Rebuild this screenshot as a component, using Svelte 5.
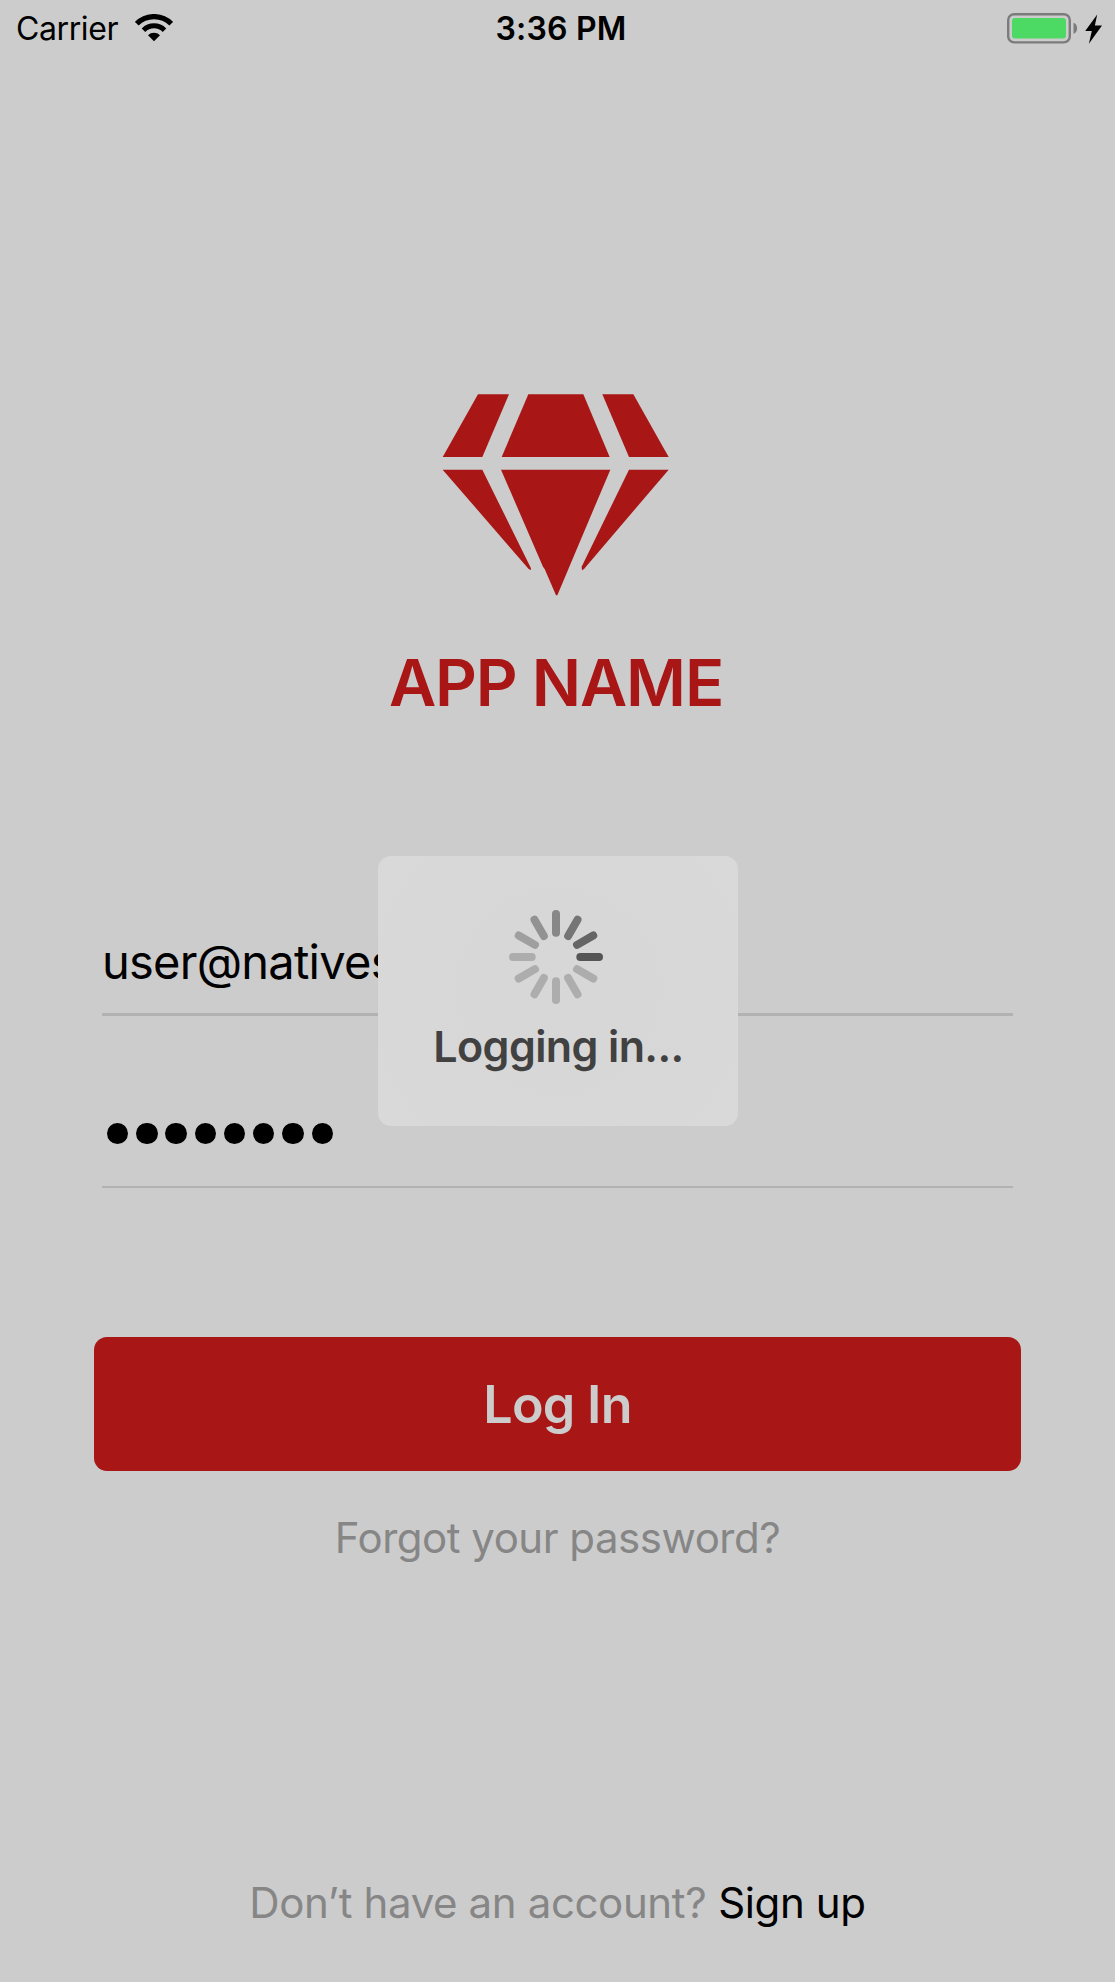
<script>
  const email = 'user@nativescript.org';
  const passwordDots = Array.from({ length: 8 });

  // Spinner spokes, clockwise from twelve o'clock
  const spokes = [
    '#878787', '#757575', '#656565', '#555555', '#adadad', '#adadad',
    '#adadad', '#adadad', '#adadad', '#adadad', '#9f9f9f', '#929292'
  ];
</script>

<main class="screen">
  <header class="status">
    <div class="network">
      <span class="carrier">Carrier</span>
      <svg class="wifi" viewBox="0 0 38 28" aria-hidden="true">
        <path d="M1.8 9.7 A24.3 24.3 0 0 1 36.2 9.7" fill="none" stroke="#000" stroke-width="5.2" />
        <path d="M8.5 16.2 A14.9 14.9 0 0 1 29.5 16.2" fill="none" stroke="#000" stroke-width="5" />
        <path d="M13 21.2 A8.6 8.6 0 0 1 25 21.2 L19 27.2 Z" />
      </svg>
    </div>
    <span class="time">3:36 PM</span>
    <div class="power">
      <svg class="battery" viewBox="0 0 72 31" aria-hidden="true">
        <rect x="1.2" y="1.2" width="61.6" height="28.2" rx="6" fill="none" stroke="#7b7b7b" stroke-width="2.4" />
        <rect x="5" y="5" width="54" height="20.5" rx="3" fill="#4cd964" />
        <path d="M66.5 9.8 C71.3 11.2 71.3 19.4 66.5 20.8 Z" fill="#7b7b7b" />
      </svg>
      <svg class="bolt" viewBox="0 0 17 30" aria-hidden="true">
        <path d="M12.2 .5 L.2 17 H6.8 L3.9 29.7 L17 11.6 H9.9 Z" />
      </svg>
    </div>
  </header>

  <svg class="logo" viewBox="60 72 705 606" aria-hidden="true">
    <path d="M174 73H267L187 261H68Z" />
    <path d="M325 73H490L569 261H245Z" />
    <path d="M547 73H640L746 261H627Z" />
    <path d="M68 299H187L330 589Q334 596 333 600L326 597Z" />
    <path d="M243 299H571L448 590L444 600L412 676H408L374 597L369 590Z" />
    <path d="M627 299H746L492 597L486 601L485 590Z" />
  </svg>
  <h1>APP NAME</h1>

  <form class="fields" onsubmit={(e) => e.preventDefault()}>
    <div class="field email">{email}</div>
    <div class="field password">
      {#each passwordDots as _}<i></i>{/each}
    </div>
    <button type="submit">Log In</button>
  </form>

  <p class="forgot">Forgot your password?</p>
  <footer>
    <span class="question">Don’t have an account?</span>
    <span class="signup">Sign up</span>
  </footer>

  <div class="overlay">
    <div class="dialog">
      <svg class="spinner" viewBox="-48 -48 96 96" aria-hidden="true">
        {#each spokes as color, i}
          <line y1="-43" y2="-24.3" stroke={color} transform="rotate({i * 30})" />
        {/each}
      </svg>
      <span class="message">Logging in...</span>
    </div>
  </div>
</main>

<style>
  :global(body) {
    margin: 0;
    background: #ccc;
  }
  .screen {
    position: relative;
    display: flex;
    flex-direction: column;
    align-items: center;
    width: 1115px;
    height: 1982px;
    overflow: hidden;
    background: #ccc;
    color: #000;
    font-family: Inter, 'Liberation Sans', sans-serif;
  }
  .status {
    display: grid;
    grid-template-columns: 1fr auto 1fr;
    align-items: center;
    box-sizing: border-box;
    width: 100%;
    height: 56px;
    padding: 0 13px 0 16px;
    font-size: 32px;
    line-height: 58px;
  }
  .network,
  .power {
    display: flex;
    align-items: center;
  }
  .network {
    gap: 17px;
  }
  .carrier {
    letter-spacing: -0.4px;
  }
  .wifi {
    width: 38px;
    height: 28px;
    margin-bottom: 2px;
  }
  .time {
    padding-left: 4px;
    font-weight: 600;
    letter-spacing: 0.23px;
  }
  .power {
    justify-content: flex-end;
    gap: 6px;
    margin-bottom: 1px;
  }
  .battery {
    width: 72px;
    height: 31px;
  }
  .bolt {
    width: 17px;
    height: 30px;
  }
  .logo {
    flex: none;
    width: 235px;
    height: 202px;
    margin-top: 338px;
    fill: #a81616;
  }
  h1 {
    margin: 47px 3px 0 0;
    color: #a81616;
    font-size: 65px;
    font-weight: 600;
    line-height: 80px;
    letter-spacing: -1.16px;
  }
  .fields {
    display: flex;
    flex-direction: column;
    align-items: center;
    width: 927px;
    margin-top: 208px;
  }
  .field {
    box-sizing: border-box;
    width: 911px;
    border-bottom: 3px solid #b2b2b2;
  }
  .email {
    height: 85px;
    font-size: 47px;
    line-height: 62px;
    letter-spacing: -0.75px;
  }
  .password {
    display: flex;
    gap: 7.95px;
    height: 172px;
    padding: 107px 0 0 5px;
    border-bottom-width: 2px;
  }
  .password i {
    width: 21.3px;
    height: 21.3px;
    border-radius: 50%;
    background: #000;
  }
  button {
    width: 927px;
    height: 134px;
    margin-top: 149px;
    padding: 2px 0 0;
    border: 0;
    border-radius: 13px;
    background: #a81616;
    color: #ccc;
    font: 600 52px/132px Inter, 'Liberation Sans', sans-serif;
    letter-spacing: -0.72px;
  }
  .forgot {
    margin: 37px 0 0;
    color: #868686;
    font-size: 42px;
    line-height: 60px;
    letter-spacing: -0.48px;
  }
  footer {
    display: flex;
    gap: 12px;
    margin-top: 305px;
    font-size: 42px;
    line-height: 60px;
    letter-spacing: -0.38px;
  }
  .question {
    color: #868686;
  }
  .overlay {
    position: absolute;
    inset: 0;
    display: grid;
    place-items: center;
  }
  .dialog {
    display: flex;
    flex-direction: column;
    align-items: center;
    box-sizing: border-box;
    width: 360px;
    height: 270px;
    padding-top: 53px;
    border-radius: 13px;
    background: radial-gradient(circle, #d7d7d7 40%, #d9d9d9);
  }
  .spinner {
    flex: none;
    width: 96px;
    height: 96px;
    margin-right: 4px;
  }
  .spinner line {
    stroke-width: 8;
    stroke-linecap: round;
  }
  .message {
    margin: 11px 0 0 2px;
    color: #414141;
    font-size: 43px;
    font-weight: 600;
    line-height: 60px;
    letter-spacing: -0.61px;
  }
</style>
